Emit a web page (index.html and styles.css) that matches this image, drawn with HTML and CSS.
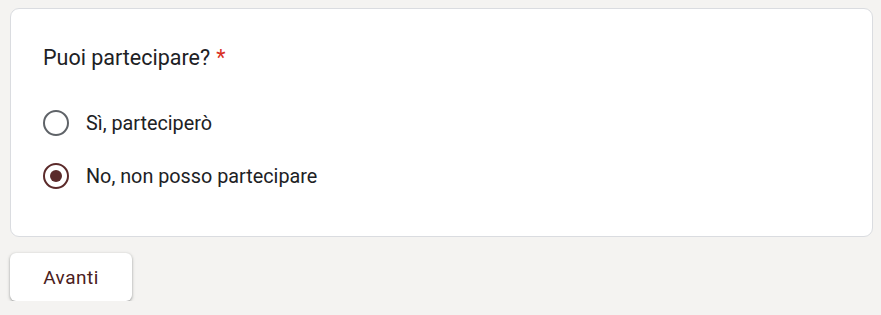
FILE: index.html
```html
<!DOCTYPE html>
<html lang="it">
<head>
<meta charset="utf-8">
<link rel="stylesheet" href="styles.css">
</head>
<body>
<div class="page">
  <div class="card">
    <div class="title">Puoi partecipare?<span class="req">*</span></div>
    <div class="options">
      <label class="option">
        <span class="radio"></span>
        <span class="label">Sì, parteciperò</span>
      </label>
      <label class="option">
        <span class="radio checked"></span>
        <span class="label">No, non posso partecipare</span>
      </label>
    </div>
  </div>
  <div class="actions">
    <button class="btn">Avanti</button>
  </div>
</div>
</body>
</html>
```
FILE: styles.css
```css
html, body {
  margin: 0;
  padding: 0;
  background: #f4f3f1;
  font-family: Roboto, "Liberation Sans", sans-serif;
}
.page {
  padding: 8px 8px 0 10px;
}
.card {
  background: #fff;
  border: 1px solid #dadce0;
  border-radius: 9px;
  padding: 35px 32px 0;
  height: 229px;
  box-sizing: border-box;
}
.title {
  font-size: 21.5px;
  line-height: 28px;
  color: #202124;
}
.req {
  color: #d93025;
  margin-left: 6px;
}
.options {
  margin-top: 38px;
  display: flex;
  flex-direction: column;
  gap: 27px;
}
.option {
  display: flex;
  align-items: center;
  gap: 17px;
  height: 26px;
}
.radio {
  width: 26px;
  height: 26px;
  box-sizing: border-box;
  border: 2px solid #5f6368;
  border-radius: 50%;
  display: flex;
  align-items: center;
  justify-content: center;
}
.radio.checked {
  border-color: #5b2a2a;
}
.radio.checked::after {
  content: "";
  width: 12px;
  height: 12px;
  border-radius: 50%;
  background: #5b2a2a;
}
.label {
  font-size: 19.8px;
  color: #202124;
}
.actions {
  margin-top: 16px;
}
.btn {
  width: 122px;
  height: 48px;
  border: none;
  background: #fff;
  border-radius: 6px;
  box-shadow: 0 1px 2px rgba(60,64,67,0.35), 0 1px 3px 1px rgba(60,64,67,0.15);
  font-family: Roboto, "Liberation Sans", sans-serif;
  font-size: 19px;
  font-weight: 400;
  letter-spacing: 0.5px;
  color: #4a2020;
  padding: 0;
}
```
